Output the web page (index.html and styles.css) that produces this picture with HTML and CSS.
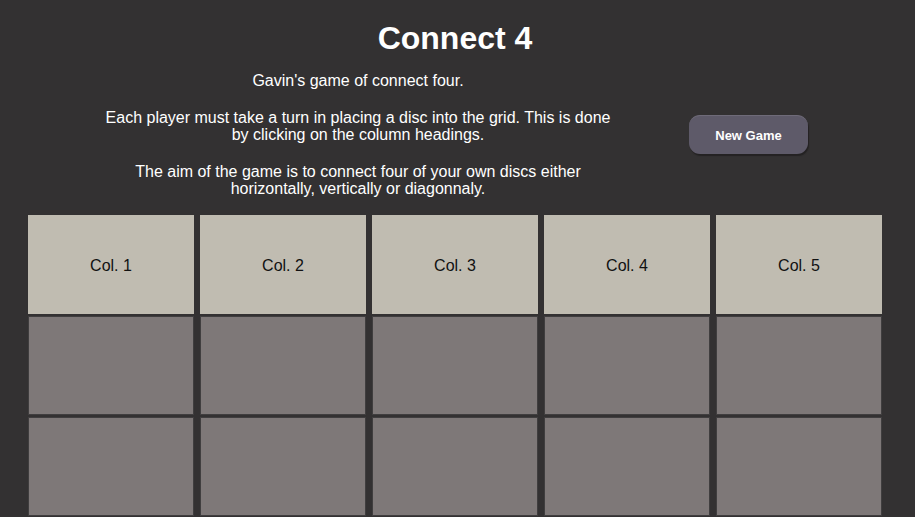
FILE: index.html
```html
<!DOCTYPE html>
<html lang="en">
<head>
<meta charset="utf-8">
<title>Connect 4</title>
<link rel="stylesheet" href="styles.css">
</head>
<body>
<div class="page">
  <h1 class="title">Connect 4</h1>
  <div class="intro">
    <div class="intro-text">
      <p>Gavin's game of connect four.</p>
      <p>Each player must take a turn in placing a disc into the grid. This is done by clicking on the column headings.</p>
      <p>The aim of the game is to connect four of your own discs either horizontally, vertically or diagonnaly.</p>
    </div>
    <button class="new-game" type="button">New Game</button>
  </div>
  <div class="board">
    <div class="head">Col. 1</div>
    <div class="head">Col. 2</div>
    <div class="head">Col. 3</div>
    <div class="head">Col. 4</div>
    <div class="head">Col. 5</div>
    <div class="cell"></div><div class="cell"></div><div class="cell"></div><div class="cell"></div><div class="cell"></div>
    <div class="cell"></div><div class="cell"></div><div class="cell"></div><div class="cell"></div><div class="cell"></div>
    <div class="cell"></div><div class="cell"></div><div class="cell"></div><div class="cell"></div><div class="cell"></div>
    <div class="cell"></div><div class="cell"></div><div class="cell"></div><div class="cell"></div><div class="cell"></div>
  </div>
</div>
</body>
</html>
```

FILE: styles.css
```css
html, body {
  margin: 0;
  padding: 0;
  overflow: hidden;
  background: #333132;
}

body {
  font-family: "Liberation Sans", Arial, sans-serif;
  color: #ffffff;
}

.page {
  padding-top: 20px;
}

.title {
  margin: 0 5px 0 0;
  font-size: 32px;
  font-weight: bold;
  line-height: 36px;
  text-align: center;
}

.intro {
  display: flex;
  align-items: center;
  margin-top: 16px;
}

.intro-text {
  width: 520px;
  margin-left: 98px;
  text-align: center;
  font-size: 16px;
  line-height: 17px;
}

.intro-text p {
  margin: 0 0 20px 0;
}

.intro-text p:last-child {
  margin-bottom: 0;
}

.new-game {
  margin-left: 71px;
  width: 119px;
  height: 39px;
  padding: 0;
  background: #5e5a69;
  color: #ffffff;
  font-family: "Liberation Sans", Arial, sans-serif;
  font-size: 13px;
  font-weight: bold;
  border: none;
  border-top: 1px solid #6f6b79;
  border-radius: 11px;
  box-shadow: 1px 2px 1px #242223;
}

.board {
  display: grid;
  grid-template-columns: repeat(5, 166px);
  grid-auto-rows: 99px;
  column-gap: 6px;
  row-gap: 2px;
  margin: 18px 0 0 28px;
}

.head {
  display: flex;
  align-items: center;
  justify-content: center;
  background: #c0bcb1;
  color: #111111;
  font-size: 16px;
  padding-top: 2px;
}

.cell {
  background: #7e7878;
  border: 1px solid #403e3f;
}
```
